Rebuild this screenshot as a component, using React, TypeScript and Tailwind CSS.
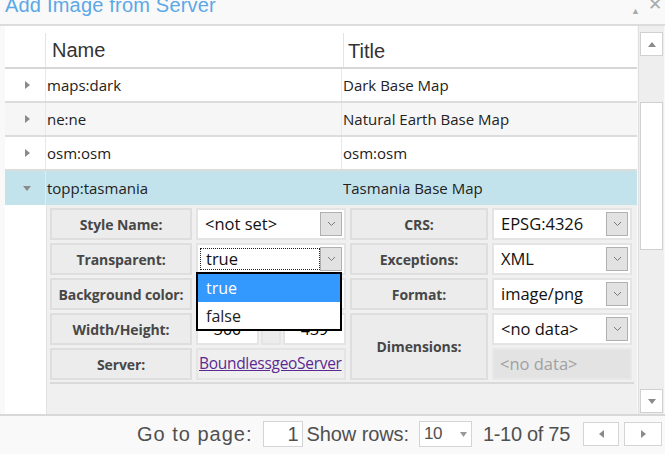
import React from 'react';

const gothic = { fontFamily: '"Liberation Sans", Arial, sans-serif' };
const segoe = { fontFamily: '"Open Sans", "Noto Sans", sans-serif' };

function Chevron() {
  return (
    <svg width="9" height="6" viewBox="0 0 9 6">
      <polyline points="1,1 4.5,4.5 8,1" fill="none" stroke="#7a7a7a" strokeWidth="1" />
    </svg>
  );
}

function ArrowBox() {
  return (
    <div className="w-[22px] h-[24px] my-auto mr-[2px] bg-[#e2e2e2] border border-[#b0b0b0] flex items-center justify-center shrink-0">
      <Chevron />
    </div>
  );
}

function Label({ text, className = '' }: { text: string; className?: string }) {
  return (
    <div className={`border-2 border-[#dedede] bg-[#ececec] flex items-center justify-center text-[14px] font-bold text-[#474747] tracking-[-0.1px] ${className}`}>
      {text}
    </div>
  );
}

function SelectCell({ value, focus }: { value: string; focus?: boolean }) {
  return (
    <div className="border-2 border-[#e4e4e4] bg-white flex">
      <div className="flex-1 flex items-center py-[3px] pl-[2px]">
        <div className={`h-full w-full flex items-center pl-[5px] text-[16.5px] text-[#111] ${focus ? 'border border-dotted border-[#222]' : ''}`}>
          {value}
        </div>
      </div>
      <ArrowBox />
    </div>
  );
}

function Expander({ open }: { open?: boolean }) {
  return (
    <div className="w-[41px] border-r border-[#e8e8e8] flex items-center justify-center pl-[4px]">
      {open ? (
        <svg width="8" height="5" viewBox="0 0 8 5"><polygon points="0,0 8,0 4,5" fill="#8a8a8a" /></svg>
      ) : (
        <svg width="5" height="8" viewBox="0 0 5 8"><polygon points="0,0 5,4 0,8" fill="#8a8a8a" /></svg>
      )}
    </div>
  );
}

const rows = [
  { name: 'maps:dark', title: 'Dark Base Map', bg: 'bg-white' },
  { name: 'ne:ne', title: 'Natural Earth Base Map', bg: 'bg-[#f6f6f6]' },
  { name: 'osm:osm', title: 'osm:osm', bg: 'bg-white' },
];

export default function App() {
  return (
    <div className="relative w-[665px] h-[454px] overflow-hidden bg-[#f9f9f9]" style={segoe}>
      {/* title bar */}
      <div className="h-[26px] border-b-2 border-[#dcdcdc] flex justify-between overflow-hidden">
        <div className="pl-[5px] -mt-[8px] text-[20px] text-[#5ba8e6] leading-[26px] tracking-[0.2px]" style={gothic}>
          Add Image from Server
        </div>
        <div className="flex items-start gap-[8px] pr-[3px] -mt-[4px] text-[#aaa]">
          <span className="text-[9px] mt-[8px]">▲</span>
          <span className="text-[17px] leading-[17px]" style={gothic}>✕</span>
        </div>
      </div>

      {/* grid */}
      <div className="flex h-[390px] border-b-2 border-[#d8d8d8]">
        <div className="w-[632px] ml-[5px] bg-white flex flex-col">
          <div className="h-[43px] border-b-2 border-[#d6d6d6] flex text-[20px] text-[#333]" style={gothic}>
            <div className="w-[41px] border-r border-[#e4e4e4] mt-[7px]" />
            <div className="w-[298px] border-r border-[#e4e4e4] mt-[7px] pl-[6px] flex items-center">Name</div>
            <div className="flex-1 pl-[4px] flex items-center pt-[8px]">Title</div>
          </div>
          {rows.map((r) => (
            <div key={r.name} className={`h-[34px] border-b-2 border-[#dcdcdc] flex text-[15px] text-[#222] ${r.bg}`}>
              <Expander />
              <div className="w-[296px] border-r border-[#e8e8e8] pl-[1px] flex items-center">{r.name}</div>
              <div className="flex-1 pl-[1px] flex items-center">{r.title}</div>
            </div>
          ))}
          <div className="h-[34px] flex text-[15px] text-[#222] bg-[#c2e2ec]">
            <Expander open />
            <div className="w-[296px] pl-[1px] flex items-center">topp:tasmania</div>
            <div className="flex-1 pl-[1px] flex items-center">Tasmania Base Map</div>
          </div>

          {/* detail panel */}
          <div className="flex-1 ml-[41px] bg-[#f0f0f0] border-l border-[#e2e2e2] pt-[3px] px-[3px]">
            <div className="grid grid-cols-[142px_150px_138px_140px] grid-rows-[32px_32px_32px_32px_32px] gap-x-[4px] gap-y-[3px] pb-[2px] border-b-2 border-[#dadada]">
              <Label text="Style Name:" />
              <SelectCell value="<not set>" />
              <Label text="CRS:" />
              <SelectCell value="EPSG:4326" />

              <Label text="Transparent:" />
              <SelectCell value="true" focus />
              <Label text="Exceptions:" />
              <SelectCell value="XML" />

              <Label text="Background color:" />
              <div className="border-2 border-[#e4e4e4] bg-white" />
              <Label text="Format:" />
              <SelectCell value="image/png" />

              <Label text="Width/Height:" />
              <div className="flex gap-[2px]">
                <div className="flex-1 border-2 border-[#e4e4e4] bg-white flex items-center justify-center text-[16px]">300</div>
                <div className="w-[20px] border-2 border-[#e4e4e4] bg-[#ececec] flex items-center justify-center text-[13px]">-</div>
                <div className="flex-1 border-2 border-[#e4e4e4] bg-white flex items-center justify-center text-[16px]">439</div>
              </div>
              <Label text="Dimensions:" className="row-span-2" />
              <SelectCell value="<no data>" />

              <Label text="Server:" />
              <div className="border-2 border-[#e4e4e4] bg-[#efefef] flex items-center pl-[1px]">
                <span className="text-[15.5px] text-[#5b2a91] underline tracking-[-0.3px]">BoundlessgeoServer</span>
              </div>
              <div className="border-2 border-[#e8e8e8] bg-[#e3e3e3] flex items-center pl-[6px] text-[16.5px] text-[#a0a0a0]">
                &lt;no data&gt;
              </div>
            </div>
          </div>
        </div>

        {/* scrollbar */}
        <div className="w-[26px] ml-[1px] border-l border-[#e0e0e0] bg-[#eeeeee] flex flex-col items-center pt-[6px] pb-[1px]">
          <div className="w-[23px] h-[24px] bg-white border border-[#d0d0d0] flex items-center justify-center">
            <svg width="8" height="5" viewBox="0 0 8 5"><polygon points="0,5 8,5 4,0" fill="#8a8a8a" /></svg>
          </div>
          <div className="w-[23px] h-[148px] mt-[46px] bg-white border border-[#d0d0d0]" />
          <div className="flex-1" />
          <div className="w-[23px] h-[24px] bg-white border border-[#d0d0d0] flex items-center justify-center">
            <svg width="8" height="5" viewBox="0 0 8 5"><polygon points="0,0 8,0 4,5" fill="#8a8a8a" /></svg>
          </div>
        </div>
      </div>

      {/* footer */}
      <div className="h-[36px] flex items-center justify-end pr-[3px] text-[20px] text-[#505050]" style={gothic}>
        <span className="mr-[10px] tracking-[1px]">Go to page:</span>
        <div className="w-[40px] h-[26px] bg-white border border-[#d4d4d4] flex items-center justify-end pr-[3px]">1</div>
        <span className="ml-[4px] mr-[10px] tracking-[-0.1px]">Show rows:</span>
        <div className="w-[53px] h-[26px] bg-white border border-[#d4d4d4] flex items-center px-[4px] justify-between">
          <span className="text-[17px] tracking-[-0.5px]">10</span>
          <svg width="7" height="5" viewBox="0 0 7 5"><polygon points="0,0 7,0 3.5,5" fill="#999" /></svg>
        </div>
        <span className="ml-[11px] mr-[13px] tracking-[-0.3px]">1-10 of 75</span>
        <div className="w-[36px] h-[24px] bg-white border border-[#d4d4d4] flex items-center justify-center">
          <svg width="5" height="8" viewBox="0 0 5 8"><polygon points="5,0 0,4 5,8" fill="#8a8a8a" /></svg>
        </div>
        <div className="w-[38px] h-[24px] ml-[5px] bg-white border border-[#d4d4d4] flex items-center justify-center">
          <svg width="5" height="8" viewBox="0 0 5 8"><polygon points="0,0 5,4 0,8" fill="#8a8a8a" /></svg>
        </div>
      </div>

      {/* open dropdown */}
      <div className="absolute left-[196px] top-[272px] w-[146px] h-[59px] bg-white border-2 border-black flex flex-col text-[16px]">
        <div className="h-[28px] bg-[#3399ff] text-white flex items-center pl-[8px]">true</div>
        <div className="flex-1 text-[#222] flex items-center pl-[8px]">false</div>
      </div>
    </div>
  );
}
